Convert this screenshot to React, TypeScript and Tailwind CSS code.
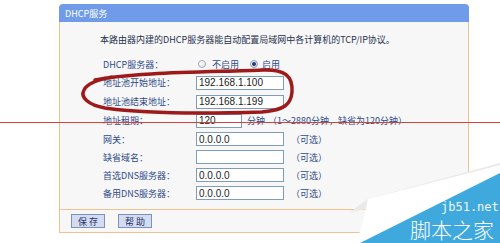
import React from "react";

const CJK = '"Noto Sans CJK SC", "Noto Sans", sans-serif';

function Field({ value, w = "w-[88px]" }: { value: string; w?: string }) {
  return (
    <input
      readOnly
      value={value}
      className={`${w} h-[14px] shrink-0 border border-[#7f9db9] bg-white px-[2px] text-[10px] leading-none text-[#222] outline-none`}
      style={{ fontFamily: '"Liberation Sans", Arial, sans-serif' }}
    />
  );
}

function Row({
  label,
  h = "h-[18px]",
  children,
}: {
  label: string;
  h?: string;
  children: React.ReactNode;
}) {
  return (
    <div className={`flex items-center ${h}`}>
      <div className="w-[93px] shrink-0 text-[9px] leading-none text-[#2f4a88]">{label}</div>
      {children}
    </div>
  );
}

function Optional() {
  return <span className="ml-[7px] text-[9px] leading-none text-[#2f4a88]">（可选）</span>;
}

export default function App() {
  return (
    <div className="relative h-[243px] w-[500px] overflow-hidden bg-white" style={{ fontFamily: CJK }}>
      <div className="ml-[59px] w-[410px] pt-[4px]">
        <div className="flex h-[18px] items-center rounded-t-[4px] bg-[#6f9be8] pl-[6px] text-[9px] leading-none text-white">
          DHCP服务
        </div>
        <div className="border-x border-b border-[#efc38e] bg-[#f7f7f7] pt-[8px]">
          <div className="flex h-[18px] items-center pl-[40px] text-[9px] leading-none text-[#27314d]">
            本路由器内建的DHCP服务器能自动配置局域网中各计算机的TCP/IP协议。
          </div>
          <div className="mt-[7px] pl-[43px]">
            <Row label="DHCP服务器：">
              <span className="ml-[2px] h-[8px] w-[8px] shrink-0 rounded-full border border-[#a3aab5] bg-gradient-to-br from-white to-[#dfe3ea]" />
              <span className="ml-[6px] text-[9px] leading-none text-[#2f4a88]">不启用</span>
              <span className="ml-[11px] flex h-[8px] w-[8px] shrink-0 items-center justify-center rounded-full border border-[#8c9ab0] bg-gradient-to-br from-white to-[#d6dce6]">
                <span className="h-[4px] w-[4px] rounded-full bg-[#1f3a78]" />
              </span>
              <span className="ml-[4px] text-[9px] leading-none text-[#2f4a88]">启用</span>
            </Row>
            <Row label="地址池开始地址：" h="h-[19px]">
              <Field value="192.168.1.100" />
            </Row>
            <Row label="地址池结束地址：" h="h-[19px]">
              <Field value="192.168.1.199" />
            </Row>
            <Row label="地址租期：" h="h-[19px]">
              <Field value="120" w="w-[46px]" />
              <span className="ml-[5px] text-[9px] leading-none text-[#2f4a88]">分钟</span>
              <span className="ml-[3px] text-[9px] leading-none text-[#2f4a88]">（1～2880分钟，缺省为120分钟）</span>
            </Row>
            <Row label="网关：">
              <Field value="0.0.0.0" />
              <Optional />
            </Row>
            <Row label="缺省域名：">
              <Field value="" />
              <Optional />
            </Row>
            <Row label="首选DNS服务器：">
              <Field value="0.0.0.0" />
              <Optional />
            </Row>
            <Row label="备用DNS服务器：">
              <Field value="0.0.0.0" />
              <Optional />
            </Row>
          </div>
          <div className="mt-[7px] flex h-[23px] items-center gap-[13px] border-t border-[#efc38e] pl-[11px]">
            <button className="flex h-[14px] w-[34px] items-center justify-center border border-[#7e8fb8] bg-[#d3dcf0] text-[9px] leading-none text-[#1f2f6a]">
              保 存
            </button>
            <button className="flex h-[14px] w-[34px] items-center justify-center border border-[#7e8fb8] bg-[#d3dcf0] text-[9px] leading-none text-[#1f2f6a]">
              帮 助
            </button>
          </div>
        </div>
      </div>

      {/* red annotation line */}
      <div className="absolute left-0 top-[122px] h-[1px] w-[500px] bg-[#d9403a]" />

      {/* hand-drawn red ellipse + watermark shapes */}
      <svg className="pointer-events-none absolute left-0 top-0" width="500" height="243" viewBox="0 0 500 243">
        <path
          d="M95 80 C 130 72, 220 72, 262 70 C 285 69, 293 76, 292 92 C 291 104, 285 110, 262 112 C 200 114, 140 113, 105 108 C 88 105, 80 97, 84 90 C 87 84, 95 80, 112 77"
          fill="none"
          stroke="#9e1a1a"
          strokeWidth="3.5"
          strokeLinecap="round"
        />
        <polygon points="350,212 368,199 500,163 500,170 420,200" fill="#e9e9e9" />
        <polygon points="368,199 500,165 500,174 360,243 356,243 363,222" fill="#ffffff" />
        <polygon points="360,243 500,173 500,243" fill="#3fa9dd" />
      </svg>

      <div
        className="absolute left-[441px] top-[201px] text-[12px] leading-[12px] text-[#eef7fc]"
        style={{ fontFamily: '"DejaVu Sans Mono", monospace' }}
      >
        jb51.net
      </div>
      <div className="absolute left-[410px] top-[219px] whitespace-nowrap text-[21px] font-light leading-[21px] text-white">
        脚本之家
      </div>
    </div>
  );
}
